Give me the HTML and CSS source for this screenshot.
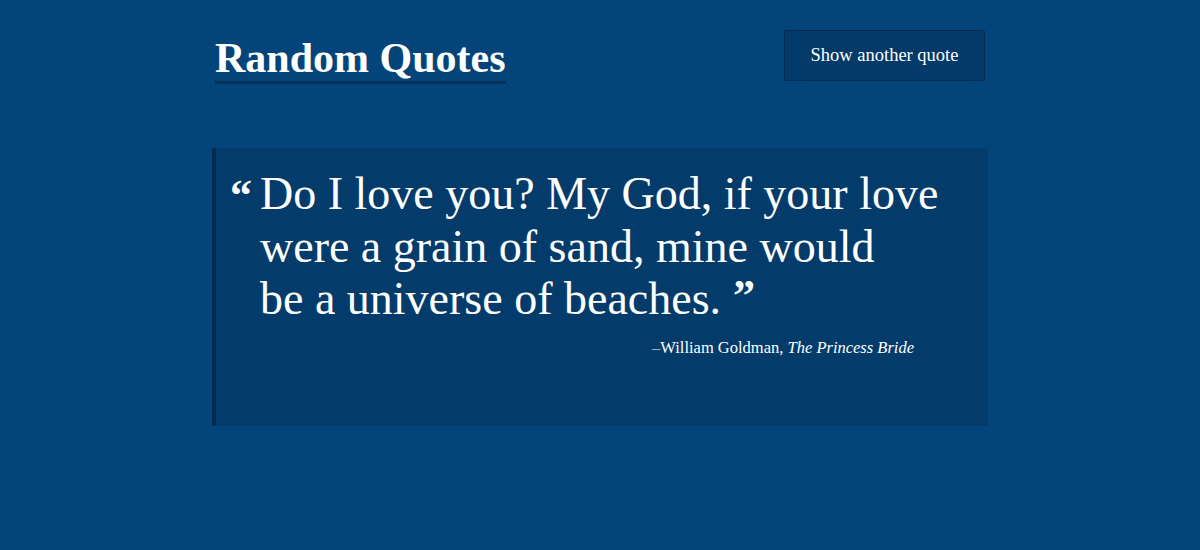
FILE: index.html
```html
<!DOCTYPE html>
<html lang="en">
<head>
<meta charset="UTF-8">
<meta name="viewport" content="width=device-width, initial-scale=1.0">
<title>Random Quotes</title>
<link rel="stylesheet" href="styles.css">
</head>
<body>
<div class="wrap">
    <header class="top">
        <h1 class="title">Random Quotes</h1>
        <button class="next">Show another quote</button>
    </header>
    <section class="card">
        <blockquote class="quote">
            <span class="mark open">&ldquo;</span>
            <p class="text">Do I love you? My God, if your love<br>were a grain of sand, mine would<br>be a universe of beaches.<span class="mark close">&rdquo;</span></p>
        </blockquote>
        <p class="cite"><span class="dash">&ndash;</span>William Goldman, <em>The Princess Bride</em></p>
    </section>
</div>
</body>
</html>
```

FILE: styles.css
```css
body {
    margin: 0;
    background-color: #03457a;
    color: #fff;
    font-family: "Liberation Serif", "DejaVu Serif", serif;
}
.wrap {
    width: 776px;
    margin: 0 auto;
    padding-top: 30px;
}
.top {
    display: flex;
    justify-content: space-between;
    align-items: flex-start;
    padding-left: 3px;
    padding-right: 3px;
}
.title {
    margin: 0;
    padding-top: 6px;
    font-size: 42px;
    line-height: 44px;
    font-weight: bold;
    border-bottom: 3px solid #02325c;
    padding-bottom: 1px;
}
.next {
    width: 201px;
    height: 51px;
    background-color: #033a6a;
    border: 1px solid #022c52;
    border-radius: 2px;
    color: #fff;
    font-family: inherit;
    font-size: 18.5px;
    cursor: pointer;
}
.card {
    margin-top: 64px;
    height: 278px;
    box-sizing: border-box;
    background-color: #033c6b;
    border-left: 4px solid #022d52;
    padding: 20px 40px 0 14px;
}
.quote {
    display: flex;
    margin: 0;
}
.mark {
    font-weight: bold;
    font-size: 44px;
    line-height: 0;
}
.open {
    width: 30px;
    flex: none;
    padding-left: 0;
    padding-top: 28px;
}
.close {
    margin-left: 12px;
    position: relative;
    top: -4px;
}
.text {
    margin: 0;
    font-size: 46px;
    line-height: 52.5px;
}
.cite {
    margin: 12px 34px 0 0;
    text-align: right;
    font-size: 16.5px;
}
.dash {
    opacity: 0.6;
}
```
